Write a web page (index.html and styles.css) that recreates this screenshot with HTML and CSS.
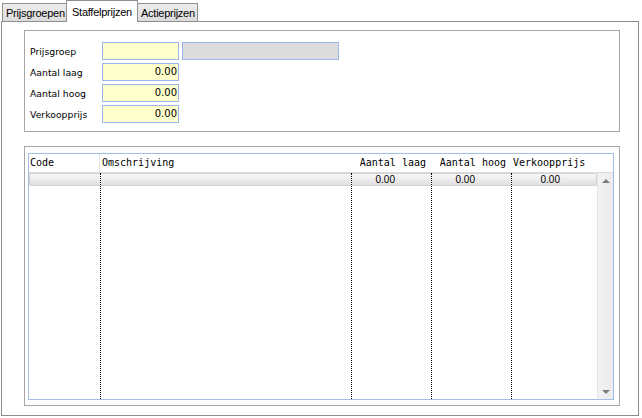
FILE: index.html
```html
<!DOCTYPE html>
<html>
<head>
<meta charset="utf-8">
<link rel="stylesheet" href="styles.css">
</head>
<body>
<div class="tabs">
  <div class="tab tab-first">Prijsgroepen</div>
  <div class="tab tab-active">Staffelprijzen</div>
  <div class="tab tab-last">Actieprijzen</div>
</div>
<div class="panel">
  <div class="box form-box">
    <div class="frow">
      <span class="lbl">Prijsgroep</span>
      <span class="inp"></span>
      <span class="inp inp-gray"></span>
    </div>
    <div class="frow">
      <span class="lbl">Aantal laag</span>
      <span class="inp">0.00</span>
    </div>
    <div class="frow">
      <span class="lbl">Aantal hoog</span>
      <span class="inp">0.00</span>
    </div>
    <div class="frow">
      <span class="lbl">Verkoopprijs</span>
      <span class="inp">0.00</span>
    </div>
  </div>
  <div class="box grid-box">
    <div class="grid">
      <div class="ghead">
        <div class="hc c-code">Code</div>
        <div class="hc c-oms">Omschrijving</div>
        <div class="hc c-laag">Aantal laag</div>
        <div class="hc c-hoog">Aantal hoog</div>
        <div class="hc c-prijs">Verkoopprijs</div>
        <div class="hc c-sb"></div>
      </div>
      <div class="gbody">
        <div class="col c-code"><div class="cell cell-first"></div></div>
        <div class="col c-oms sep"><div class="cell"></div></div>
        <div class="col c-laag sep"><div class="cell num">0.00</div></div>
        <div class="col c-hoog sep"><div class="cell num">0.00</div></div>
        <div class="col c-prijs sep"><div class="cell num cell-last">0.00</div></div>
        <div class="scrollbar">
          <div class="arr arr-up"></div>
          <div class="arr arr-down"></div>
        </div>
      </div>
    </div>
  </div>
</div>
</body>
</html>
```

FILE: styles.css
```css
* { box-sizing: border-box; }
html, body { margin: 0; padding: 0; background: #ffffff; }
body { width: 642px; height: 418px; overflow: hidden; font-family: "Liberation Sans", Arial, sans-serif; }

.tabs {
  display: flex;
  align-items: flex-end;
  height: 21px;
  padding-left: 2px;
}
.tab {
  height: 18px;
  border: 1px solid #919191;
  border-bottom: none;
  background: linear-gradient(#ededed, #dcdcdc);
  font-size: 11px;
  letter-spacing: -0.25px;
  color: #000;
  padding: 2px 0 0 3px;
  margin-left: -1px;
  line-height: 14px;
  white-space: nowrap;
  overflow: hidden;
}
.tab-first { margin-left: 0; width: 65px; }
.tab-active {
  position: relative;
  z-index: 1;
  height: 22px;
  margin-bottom: -1px;
  background: #ffffff;
  width: 72px;
  padding: 4px 0 0 5px;
}
.tab-last { width: 61px; }

.panel {
  margin-left: 1px;
  width: 638px;
  height: 395px;
  border: 1px solid #8d8d8f;
  padding: 8px 0 0 22px;
}
.box {
  width: 596px;
  border: 1px solid #a6a6a6;
}
.form-box {
  height: 102px;
  padding: 11px 0 0 5px;
}
.frow {
  display: flex;
  align-items: center;
  height: 18px;
  margin-bottom: 3px;
}
.lbl {
  width: 72px;
  font-family: "DejaVu Sans", sans-serif;
  font-size: 9.3px;
  color: #000;
}
.inp {
  width: 77px;
  height: 18px;
  border: 1px solid #9ab6ea;
  background: #ffffcc;
  font-family: "DejaVu Sans", sans-serif;
  font-size: 10px;
  text-align: right;
  padding-right: 1px;
  line-height: 16px;
}
.inp-gray {
  width: 157px;
  margin-left: 3px;
  background: #dcdcdc;
}

.grid-box {
  margin-top: 14px;
  height: 260px;
  padding: 6px 5px 5px 3px;
}
.grid {
  width: 586px;
  height: 247px;
  border: 1px solid #a3bde9;
  display: flex;
  flex-direction: column;
}
.ghead {
  display: flex;
  height: 19px;
  border-bottom: 1px solid #dcdcdc;
  font-family: "DejaVu Sans Mono", monospace;
  font-size: 10px;
  line-height: 14px;
  color: #000;
}
.hc { padding-top: 2px; white-space: nowrap; }
.c-code { width: 71px; }
.c-oms { width: 251px; }
.c-laag { width: 80px; }
.c-hoog { width: 80px; }
.c-prijs { width: 86px; }
.c-sb { width: 16px; }
.hc.c-code { padding-left: 1px; border-right: 1px solid #e6e6e6; }
.hc.c-oms { padding-left: 2px; }
.hc.c-laag { text-align: right; padding-right: 5px; }
.hc.c-hoog { text-align: right; padding-right: 5px; }
.hc.c-prijs { padding-left: 2px; }

.gbody {
  flex: 1;
  display: flex;
}
.col { height: 100%; }
.sep { border-left: 1px dotted #000; }
.cell {
  height: 13px;
  background: linear-gradient(#f8f8f8, #e9e9e9 60%, #dedede);
  border-top: 1px solid #d2d2d2;
  border-bottom: 1px solid #d2d2d2;
  font-family: "Liberation Sans", Arial, sans-serif;
  font-size: 10px;
  line-height: 11px;
  color: #000;
}
.cell-first { border-left: 1px solid #d2d2d2; border-radius: 2px 0 0 2px; }
.cell-last { border-right: 1px solid #d2d2d2; border-radius: 0 2px 2px 0; }
.num { text-align: right; padding-right: 36px; }
.scrollbar {
  width: 16px;
  height: 100%;
  background: linear-gradient(90deg, #f2f2f2, #ebebeb);
  border-left: 1px solid #e4e4e4;
  display: flex;
  flex-direction: column;
  justify-content: space-between;
  align-items: center;
  padding: 6px 0 5px 0;
}
.arr { width: 0; height: 0; border-left: 4px solid transparent; border-right: 4px solid transparent; }
.arr-up { border-bottom: 4px solid #7a7a7a; }
.arr-down { border-top: 4px solid #7a7a7a; }
```
